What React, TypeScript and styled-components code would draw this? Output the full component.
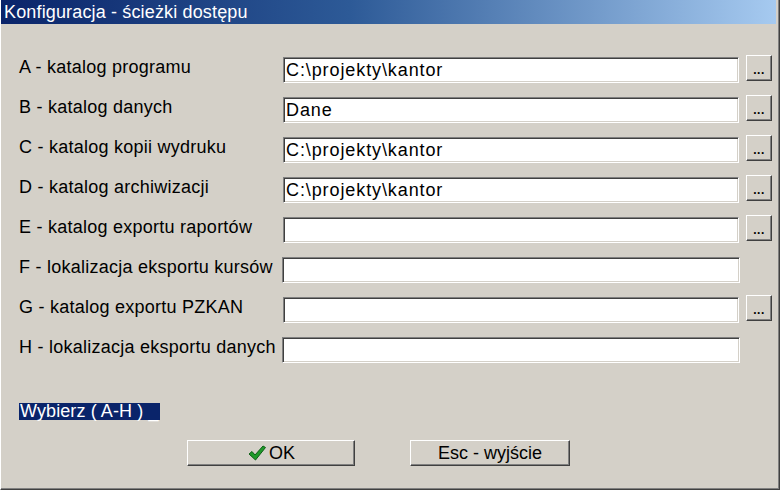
import { Fragment } from "react";
import styled, { createGlobalStyle } from "styled-components";

const GlobalStyle = createGlobalStyle`
  html, body {
    margin: 0;
    padding: 0;
    background: #d4d0c8;
  }
  * {
    box-sizing: border-box;
  }
`;

type PathRow = {
  key: string;
  label: string;
  value: string;
  browse: boolean;
};

const rows: PathRow[] = [
  { key: "A", label: "katalog programu", value: "C:\\projekty\\kantor", browse: true },
  { key: "B", label: "katalog danych", value: "Dane", browse: true },
  { key: "C", label: "katalog kopii wydruku", value: "C:\\projekty\\kantor", browse: true },
  { key: "D", label: "katalog archiwizacji", value: "C:\\projekty\\kantor", browse: true },
  { key: "E", label: "katalog exportu raportów", value: "", browse: true },
  { key: "F", label: "lokalizacja eksportu kursów", value: "", browse: false },
  { key: "G", label: "katalog exportu PZKAN", value: "", browse: true },
  { key: "H", label: "lokalizacja eksportu danych", value: "", browse: false },
];

const Window = styled.div`
  width: 780px;
  height: 490px;
  display: flex;
  flex-direction: column;
  background: #d4d0c8;
  border-left: 1px solid #ffffff;
  border-right: 1px solid #404040;
  border-bottom: 1px solid #404040;
  box-shadow: inset -1px -1px 0 #808080;
  font-family: "Liberation Sans", Arial, sans-serif;
  color: #000;
  overflow: hidden;
`;

const TitleBar = styled.div`
  height: 24px;
  flex: none;
  display: flex;
  align-items: center;
  padding-left: 3px;
  margin-right: 3px;
  background: linear-gradient(to right, #0a246a 0%, #2d5a97 45%, #a6caf0 100%);
  color: #ffffff;
  font-size: 18px;
  letter-spacing: 0.15px;
  white-space: nowrap;
`;

const Body = styled.div`
  flex: 1;
  display: flex;
  flex-direction: column;
  padding: 26px 0 0 18px;
`;

const Grid = styled.div`
  display: grid;
  grid-template-columns: 264px 456px 26px;
  grid-auto-rows: 40px;
`;

const Label = styled.div`
  align-self: start;
  padding-top: 7px;
  font-size: 18px;
  line-height: 20px;
  letter-spacing: 0.25px;
  white-space: nowrap;
`;

const Field = styled.div<{ $narrow?: boolean }>`
  align-self: center;
  height: 26px;
  width: ${(p) => (p.$narrow ? "458px" : "456px")};
  margin-left: ${(p) => (p.$narrow ? "-1px" : "0")};
  display: flex;
  align-items: center;
  padding-left: 2px;
  background: #ffffff;
  border-style: solid;
  border-width: 1px;
  border-color: #808080 #ffffff #ffffff #808080;
  box-shadow: inset 1px 1px 0 #404040, inset -1px -1px 0 #d4d0c8;
  font-size: 18px;
  letter-spacing: 0.9px;
  white-space: nowrap;
`;

const BrowseButton = styled.div`
  align-self: start;
  margin-top: 5px;
  margin-left: 7px;
  width: 26px;
  height: 26px;
  display: flex;
  align-items: flex-end;
  justify-content: center;
  padding-bottom: 5px;
  background: #d4d0c8;
  border-style: solid;
  border-width: 1px;
  border-color: #ffffff #404040 #404040 #ffffff;
  box-shadow: inset -1px -1px 0 #808080;
  font-size: 12px;
  font-weight: bold;
  line-height: 10px;
  letter-spacing: 0.5px;
`;

const Prompt = styled.div`
  align-self: flex-start;
  margin-top: 33px;
  height: 17px;
  padding: 0 1px;
  display: flex;
  align-items: center;
  background: #0a246a;
  color: #ffffff;
  font-size: 18px;
  letter-spacing: 0.1px;
  white-space: pre;
`;

const ButtonRow = styled.div`
  display: flex;
  gap: 55px;
  margin-top: 20px;
  padding-left: 168px;
`;

const DialogButton = styled.div<{ $width: number }>`
  width: ${(p) => p.$width}px;
  height: 26px;
  display: flex;
  align-items: center;
  justify-content: center;
  gap: 2px;
  background: #d4d0c8;
  border-style: solid;
  border-width: 1px;
  border-color: #ffffff #404040 #404040 #ffffff;
  box-shadow: inset -1px -1px 0 #808080;
  font-size: 18px;
`;

const Check = () => (
  <svg width="20" height="18" viewBox="0 0 20 18">
    <path
      d="M2 10 L5 7.5 L8 11 L16 2 L18.5 3.5 L8.5 16 Z"
      fill="#1f9a2a"
      stroke="#0d5f16"
      strokeWidth="1"
      strokeLinejoin="round"
    />
  </svg>
);

export default function App() {
  return (
    <>
      <GlobalStyle />
      <Window>
        <TitleBar>Konfiguracja - ścieżki dostępu</TitleBar>
        <Body>
          <Grid>
            {rows.map((row) => (
              <Fragment key={row.key}>
                <Label>
                  {row.key} - {row.label}
                </Label>
                <Field $narrow={!row.browse}>{row.value}</Field>
                {row.browse ? <BrowseButton>...</BrowseButton> : <div />}
              </Fragment>
            ))}
          </Grid>
          <Prompt>Wybierz ( A-H ) _</Prompt>
          <ButtonRow>
            <DialogButton $width={168}>
              <Check />
              OK
            </DialogButton>
            <DialogButton $width={160}>Esc - wyjście</DialogButton>
          </ButtonRow>
        </Body>
      </Window>
    </>
  );
}
